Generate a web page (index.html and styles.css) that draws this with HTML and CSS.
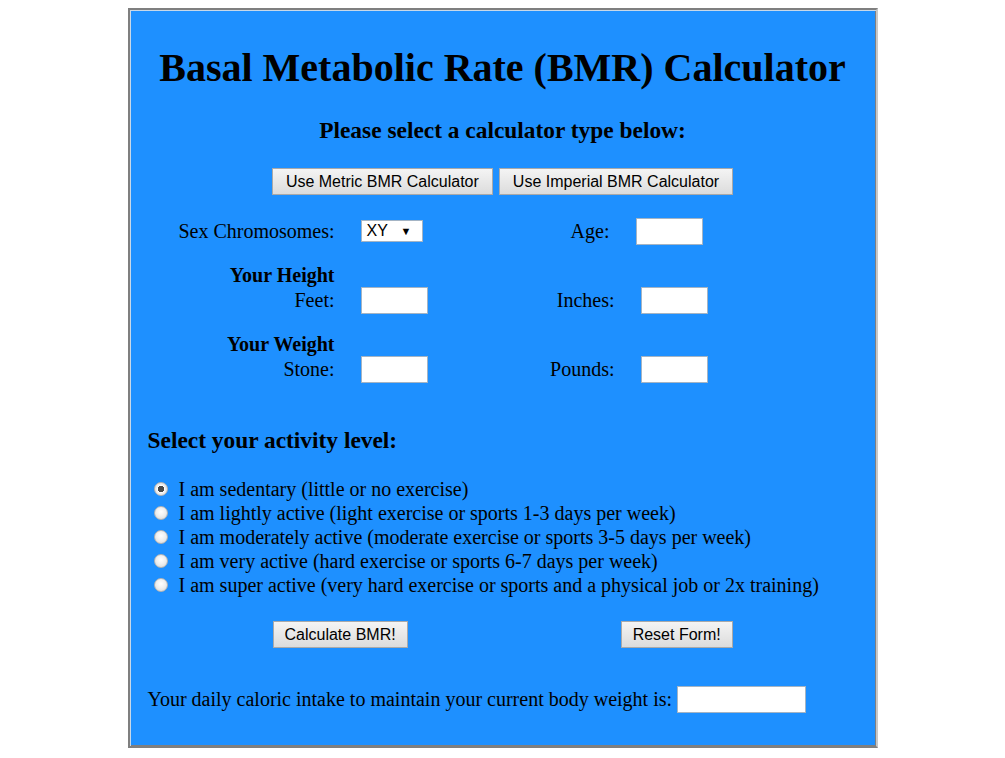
FILE: index.html
```html
<!DOCTYPE html>
<html>
<head>
<meta charset="utf-8">
<title>BMR Calculator</title>
<link rel="stylesheet" href="styles.css">
</head>
<body>
<div class="calc">
  <h1 class="title">Basal Metabolic Rate (BMR) Calculator</h1>
  <h3 class="subtitle">Please select a calculator type below:</h3>
  <div class="type-buttons">
    <button class="btn btn-type">Use Metric BMR Calculator</button>
    <button class="btn btn-type">Use Imperial BMR Calculator</button>
  </div>

  <div class="fields">
    <div class="lbl">Sex Chromosomes:</div>
    <div class="ctl"><span class="select">XY<span class="arrow">&#9660;</span></span></div>
    <div class="lbl age-lbl">Age:</div>
    <div class="ctl age-ctl"><input class="box" type="text"></div>

    <div class="sec">Your Height</div>
    <div class="lbl">Feet:</div>
    <div class="ctl"><input class="box" type="text"></div>
    <div class="lbl">Inches:</div>
    <div class="ctl"><input class="box" type="text"></div>

    <div class="sec">Your Weight</div>
    <div class="lbl">Stone:</div>
    <div class="ctl"><input class="box" type="text"></div>
    <div class="lbl">Pounds:</div>
    <div class="ctl"><input class="box" type="text"></div>
  </div>

  <h3 class="activity-title">Select your activity level:</h3>
  <div class="activities">
    <label class="act"><span class="radio checked"></span>I am sedentary (little or no exercise)</label>
    <label class="act"><span class="radio"></span>I am lightly active (light exercise or sports 1-3 days per week)</label>
    <label class="act"><span class="radio"></span>I am moderately active (moderate exercise or sports 3-5 days per week)</label>
    <label class="act"><span class="radio"></span>I am very active (hard exercise or sports 6-7 days per week)</label>
    <label class="act"><span class="radio"></span>I am super active (very hard exercise or sports and a physical job or 2x training)</label>
  </div>

  <div class="actions">
    <button class="btn btn-calc">Calculate BMR!</button>
    <button class="btn btn-reset">Reset Form!</button>
  </div>

  <div class="result">
    <span>Your daily caloric intake to maintain your current body weight is:</span>
    <input class="box result-box" type="text">
  </div>
</div>
</body>
</html>
```

FILE: styles.css
```css
html, body {
  margin: 0;
  padding: 0;
  background: #ffffff;
}
body {
  padding-top: 8px;
  font-family: "Liberation Serif", "Times New Roman", serif;
  font-size: 20px;
  color: #000;
}
.calc {
  width: 710px;
  height: 736px;
  margin: 0 auto;
  padding: 0 18px;
  background: #1e90ff;
  border: 2px solid;
  border-color: #7f7f7f #c8c8c8 #7f7f7f #7f7f7f;
  box-shadow: inset 1px 1px 0 #c8d8e8, inset -1px -1px 0 #7f7f7f;
}
.title {
  margin: 35px 0 0;
  font-size: 40px;
  line-height: 46px;
  font-weight: bold;
  text-align: center;
}
.subtitle {
  margin: 26px 0 0;
  font-size: 23.4px;
  line-height: 27px;
  font-weight: bold;
  text-align: center;
}
.type-buttons {
  margin-top: 24px;
  display: flex;
  justify-content: center;
  gap: 6px;
}
.btn {
  height: 27px;
  padding: 0 11px;
  font-family: "Liberation Sans", Arial, sans-serif;
  font-size: 16px;
  color: #000;
  background: linear-gradient(#f4f4f4, #dcdcdc);
  border: 1px solid #a9a9a9;
  border-radius: 0;
}
.btn-type {
  padding: 0 13px;
}
.fields {
  margin-top: 22px;
  display: grid;
  grid-template-columns: 187px 150px 78px auto;
  column-gap: 26px;
}
.lbl {
  height: 28px;
  line-height: 28px;
  text-align: right;
}
.ctl {
  height: 28px;
  display: flex;
  align-items: center;
}
.age-lbl {
  padding-right: 5px;
}
.age-ctl {
  margin-left: -5px;
}
.sec {
  grid-column: 1;
  margin-top: 19px;
  height: 22px;
  line-height: 22px;
  text-align: right;
  font-weight: bold;
}
.sec + .lbl {
  grid-column: 1;
}
.box {
  width: 67px;
  height: 27px;
  box-sizing: border-box;
  border: 1px solid #a4b4c4;
  background: #fff;
  padding: 0;
  margin: 0;
}
.select {
  display: flex;
  align-items: center;
  justify-content: space-between;
  width: 62px;
  height: 22px;
  box-sizing: border-box;
  padding: 0 10px 0 5px;
  background: #fff;
  border: 1px solid #a4b4c4;
  font-family: "Liberation Sans", Arial, sans-serif;
  font-size: 16px;
}
.arrow {
  font-size: 11px;
}
.activity-title {
  margin: 44px 0 0;
  font-size: 23.4px;
  line-height: 27px;
  font-weight: bold;
}
.activities {
  margin-top: 23px;
  display: flex;
  flex-direction: column;
}
.act {
  display: flex;
  align-items: center;
  height: 24px;
  line-height: 24px;
}
.radio {
  width: 14px;
  height: 14px;
  box-sizing: border-box;
  margin: 0 11px 0 6px;
  border-radius: 50%;
  border: 1px solid #b4b4b4;
  background: radial-gradient(circle at 50% 40%, #ffffff 0%, #f0f0f0 45%, #d6d6d6 100%);
}
.radio.checked {
  background: radial-gradient(circle, #4a4a4a 0 3px, #ffffff 3.5px, #f0f0f0 50%, #d6d6d6 100%);
}
.actions {
  margin-top: 24px;
  display: flex;
  padding-left: 125px;
}
.btn-reset {
  margin-left: 213px;
}
.result {
  margin-top: 38px;
  display: flex;
  align-items: center;
  gap: 5px;
}
.result-box {
  width: 129px;
}
```
